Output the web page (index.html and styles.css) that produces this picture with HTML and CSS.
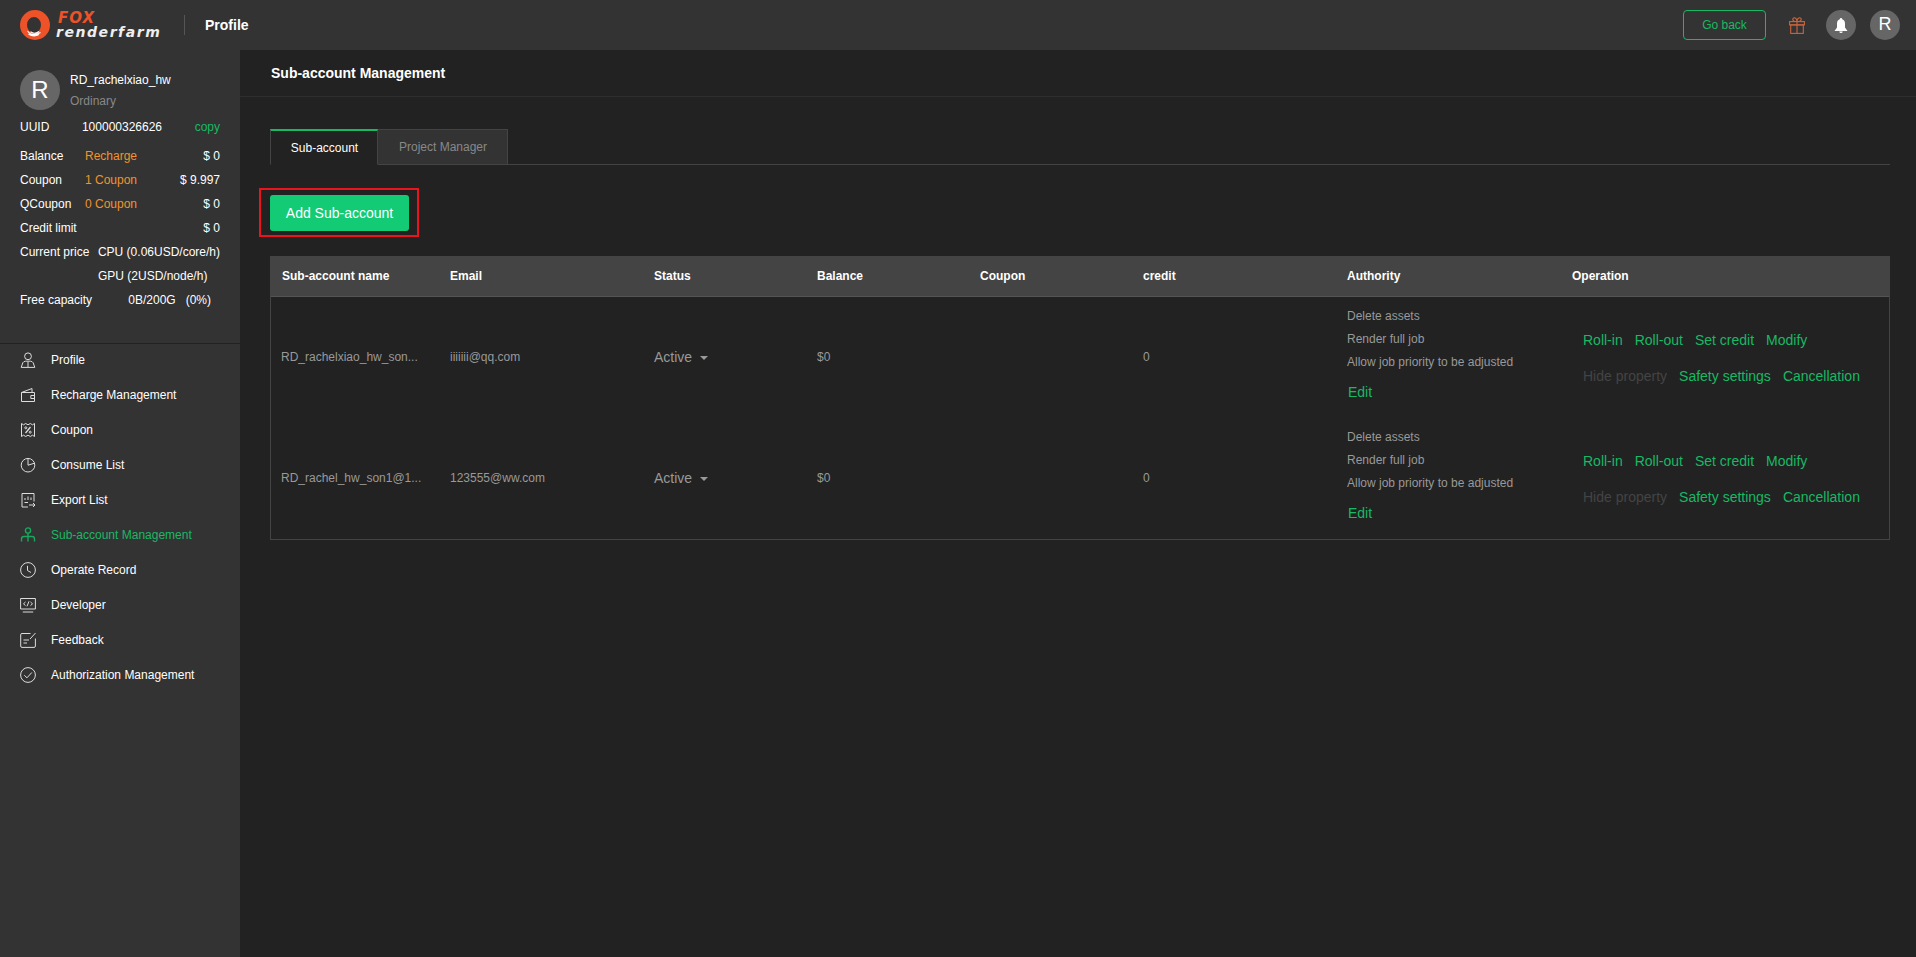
FILE: index.html
```html
<!DOCTYPE html>
<html lang="en">
<head>
<meta charset="utf-8">
<title>Sub-account Management</title>
<link rel="stylesheet" href="styles.css">
</head>
<body>
<header class="topbar">
  <div class="logo">
    <svg class="logo-ring" viewBox="0 0 30 30" width="30" height="30">
      <path fill="#ee5229" fill-rule="evenodd" d="M15 0a15 15 0 1 1 0 30a15 15 0 0 1 0-30zM14 7a7 8 0 1 0 0 16a7 8 0 0 0 0-16z"/>
      <path fill="none" stroke="#fff" stroke-width="1.100" d="M7.500 21q5 6.500 13 1.500M8.500 24q5 3.500 10.500 .5M10.500 21.800q4 3 8.500 -.3"/>
    </svg>
    <div class="logo-words">
      <span class="logo-fox">FOX</span>
      <span class="logo-render">renderfarm</span>
    </div>
  </div>
  <div class="top-sep"></div>
  <div class="top-title">Profile</div>
  <div class="top-actions">
    <button class="go-back">Go back</button>
    <svg class="gift" viewBox="0 0 16 17" width="16" height="17" fill="none" stroke="#c9653f" stroke-width="1.100">
      <rect x="0.600" y="4.600" width="14.800" height="3.300"/>
      <rect x="1.700" y="7.900" width="12.600" height="8.500"/>
      <path d="M8 4.600V16.400M8 4.600C5 4.600 3.500 3.500 3.800 2Q4.200.6 5.500.8C7 1.200 8 3 8 4.600C8 3 9 1.200 10.500.8Q11.800.6 12.200 2C12.500 3.500 11 4.600 8 4.600Z"/>
    </svg>
    <div class="circle bell">
      <svg viewBox="0 0 14 15" width="14" height="15"><path fill="#fff" d="M7 0a1.200 1.200 0 0 1 1.200 1.300C10.400 1.900 11 3.800 11 6v3.500L13.500 13H.5L3 9.500V6c0-2.200.6-4.100 2.800-4.700A1.200 1.200 0 0 1 7 0zM5.300 13.500h3.400a1.700 1.500 0 0 1-3.400 0z"/></svg>
    </div>
    <div class="circle letter">R</div>
  </div>
</header>
<div class="shell">
  <aside class="sidebar">
    <section class="account">
      <div class="identity">
        <div class="avatar">R</div>
        <div class="who">
          <div class="who-name">RD_rachelxiao_hw</div>
          <div class="who-level">Ordinary</div>
        </div>
      </div>
      <div class="row row-uuid"><span>UUID</span><span class="uuid">100000326626</span><span class="green">copy</span></div>
      <div class="row row-first"><span class="label">Balance</span><span class="orange">Recharge</span><span>$ 0</span></div>
      <div class="row"><span class="label">Coupon</span><span class="orange">1 Coupon</span><span>$ 9.997</span></div>
      <div class="row"><span class="label">QCoupon</span><span class="orange">0 Coupon</span><span>$ 0</span></div>
      <div class="row"><span class="label">Credit limit</span><span></span><span>$ 0</span></div>
      <div class="row row-price"><span>Current price</span><span>CPU (0.06USD/core/h)</span></div>
      <div class="row row-gpu"><span>GPU (2USD/node/h)</span></div>
      <div class="row row-free"><span>Free capacity</span><span class="free-value">0B/200G&nbsp;&nbsp;&nbsp;(0%)</span></div>
    </section>
    <nav class="nav">
      <a class="nav-item">
        <svg viewBox="0 0 16 16" class="nav-icon"><circle cx="8" cy="4.300" r="3.400"/><path d="M1.200 15.400L2.800 10.800Q3.600 9.400 5.500 9.200H10.500Q12.400 9.400 13.200 10.800L14.800 15.400ZM8 9.500V15"/></svg>
        Profile</a>
      <a class="nav-item">
        <svg viewBox="0 0 16 16" class="nav-icon"><path d="M1.500 5.500L12 1.500V5.500M1.500 5.500H14.500V14.500H1.500ZM14.500 8.500H10.800V11.500H14.500"/></svg>
        Recharge Management</a>
      <a class="nav-item">
        <svg viewBox="0 0 16 16" class="nav-icon"><path d="M1.500 1.500L3.500 2.800L5.700 1.500L8 2.800L10.300 1.500L12.500 2.800L14.500 1.500V14.500L12.500 13.200L10.300 14.500L8 13.200L5.700 14.500L3.500 13.200L1.500 14.500Z"/><path d="M10.500 5L5.500 11" stroke-width="1.300"/><circle cx="5.800" cy="5.800" r="1"/><circle cx="10.200" cy="10.200" r="1"/></svg>
        Coupon</a>
      <a class="nav-item">
        <svg viewBox="0 0 16 16" class="nav-icon"><circle cx="8" cy="8.200" r="6.800"/><path d="M8 1.400V8.200L14.500 6.200"/></svg>
        Consume List</a>
      <a class="nav-item">
        <svg viewBox="0 0 16 16" class="nav-icon"><path d="M8 15H2V1.500H14V9.500"/><path d="M5 6V8M8 4.500V8M11 5.500V8M4.500 10.500H8M9 13H15M13 11L15 13L13 15"/></svg>
        Export List</a>
      <a class="nav-item active">
        <svg viewBox="0 0 16 16" class="nav-icon"><circle cx="8" cy="3.500" r="2.600"/><path d="M8 6.100V9.500M1.500 14.500V12Q1.500 9.500 4 9.500H12Q14.500 9.500 14.500 12V14.500M8 9.500V14.500"/></svg>
        Sub-account Management</a>
      <a class="nav-item">
        <svg viewBox="0 0 16 16" class="nav-icon"><circle cx="8" cy="8" r="7.400"/><path d="M7.500 3.800V8.500L11 10.500"/></svg>
        Operate Record</a>
      <a class="nav-item">
        <svg viewBox="0 0 16 16" class="nav-icon"><path d="M.6 1.500H15.400V12H.6ZM2.800 15H13.200M5.500 5L3.500 6.800L5.500 8.600M10.500 5L12.500 6.800L10.500 8.600M9 4.300L7 9.300"/></svg>
        Developer</a>
      <a class="nav-item">
        <svg viewBox="0 0 16 16" class="nav-icon"><path d="M10.500 1.500H2Q.7 1.500 .7 2.800V14Q.7 15.400 2 15.400H14Q15.400 15.400 15.400 14V6.500M3.500 8H9M3.500 11H7M10 7L15.500 1"/></svg>
        Feedback</a>
      <a class="nav-item">
        <svg viewBox="0 0 16 16" class="nav-icon"><circle cx="8" cy="8" r="7.400"/><path d="M4.300 8.300L7 10.800L11.800 5.500"/></svg>
        Authorization Management</a>
    </nav>
  </aside>
  <main class="main">
    <h1 class="page-title">Sub-account Management</h1>
    <div class="content">
      <div class="tabs">
        <div class="tab tab-on">Sub-account</div>
        <div class="tab tab-off">Project Manager</div>
      </div>
      <div class="add-wrap">
        <button class="add-btn">Add Sub-account</button>
        <div class="highlight"></div>
      </div>
      <table class="grid">
        <colgroup>
          <col class="c-name"><col class="c-email"><col class="c-num"><col class="c-num"><col class="c-num"><col class="c-credit"><col class="c-auth"><col>
        </colgroup>
        <thead>
          <tr><th>Sub-account name</th><th>Email</th><th>Status</th><th>Balance</th><th>Coupon</th><th>credit</th><th>Authority</th><th class="th-op">Operation</th></tr>
        </thead>
        <tbody>
          <tr>
            <td class="td-name">RD_rachelxiao_hw_son...</td>
            <td>iiiiiii@qq.com</td>
            <td><span class="status">Active<i class="caret"></i></span></td>
            <td>$0</td>
            <td></td>
            <td>0</td>
            <td>
              <div class="perm">Delete assets</div>
              <div class="perm">Render full job</div>
              <div class="perm">Allow job priority to be adjusted</div>
              <a class="edit">Edit</a>
            </td>
            <td class="ops">
              <div class="op-line"><a>Roll-in</a><a>Roll-out</a><a>Set credit</a><a>Modify</a></div>
              <div class="op-line"><a class="off">Hide property</a><a>Safety settings</a><a>Cancellation</a></div>
            </td>
          </tr>
          <tr>
            <td class="td-name">RD_rachel_hw_son1@1...</td>
            <td>123555@ww.com</td>
            <td><span class="status">Active<i class="caret"></i></span></td>
            <td>$0</td>
            <td></td>
            <td>0</td>
            <td>
              <div class="perm">Delete assets</div>
              <div class="perm">Render full job</div>
              <div class="perm">Allow job priority to be adjusted</div>
              <a class="edit">Edit</a>
            </td>
            <td class="ops">
              <div class="op-line"><a>Roll-in</a><a>Roll-out</a><a>Set credit</a><a>Modify</a></div>
              <div class="op-line"><a class="off">Hide property</a><a>Safety settings</a><a>Cancellation</a></div>
            </td>
          </tr>
        </tbody>
      </table>
    </div>
  </main>
</div>
</body>
</html>
```
FILE: styles.css
```css
* { box-sizing: border-box; }
html, body { height: 100%; }
body {
  margin: 0;
  background: #222;
  color: #fff;
  font: 12px/1.2 "Liberation Sans", Arial, sans-serif;
  overflow: hidden;
}
.topbar {
  height: 50px;
  background: #333;
  display: flex;
  align-items: center;
  padding: 0 16px 0 20px;
}
.logo { display: flex; align-items: center; width: 164px; }
.logo-ring { flex: none; }
.logo-words { display: flex; flex-direction: column; margin-left: 6px; margin-top: 1px; font-style: italic; font-family: "DejaVu Sans", sans-serif; font-weight: 700; }
.logo-fox { color: #ee5229; font-size: 15px; line-height: 13px; letter-spacing: 1px; margin-left: 2px; }
.logo-render { color: #eee; font-size: 14px; line-height: 15px; letter-spacing: 1.550px; }
.top-sep { width: 1px; height: 20px; background: #555; }
.top-title { margin-left: 20px; font-size: 14px; font-weight: 700; }
.top-actions { margin-left: auto; display: flex; align-items: center; }
.go-back {
  width: 83px; height: 30px; margin: 0;
  background: transparent;
  border: 1px solid #17b964;
  border-radius: 4px;
  color: #17b964;
  font: 12px "Liberation Sans", Arial, sans-serif;
}
.gift { margin-left: 23px; }
.circle {
  width: 30px; height: 30px; border-radius: 50%;
  background: #666;
  display: flex; align-items: center; justify-content: center;
}
.bell { margin-left: 21px; }
.letter { margin-left: 14px; font-size: 18px; }
.shell { display: flex; height: calc(100vh - 50px); }
.sidebar { width: 240px; flex: none; background: #333; }
.account { padding: 20px 20px 31px; border-bottom: 1px solid #222; }
.identity { display: flex; align-items: flex-start; height: 45px; }
.avatar {
  width: 40px; height: 40px; border-radius: 50%;
  background: #666; font-size: 24px;
  display: flex; align-items: center; justify-content: center;
}
.who { margin-left: 10px; line-height: 20px; }
.who-level { color: #888; margin-top: 1px; }
.row { display: flex; justify-content: space-between; line-height: 24px; white-space: nowrap; }
.row-first { margin-top: 5px; }
.label { width: 65px; flex: none; }
.row .orange { flex: 1; }
.row-gpu { padding-left: 78px; justify-content: flex-start; }
.free-value { margin-right: 9px; }
.uuid { margin-left: 0; }
.orange { color: #f0932b; }
.green { color: #17b964; }
.nav { margin-top: -1px; }
.nav-item {
  display: flex; align-items: center;
  height: 35px; padding: 0 0 1px 20px;
  color: #fff;
}
.nav-icon {
  width: 16px; height: 16px; flex: none; margin-right: 15px;
  fill: none; stroke: #ddd; stroke-width: 1;
}
.active { color: #17b964; }
.active .nav-icon { stroke: #17a85c; stroke-width: 1.400; }
.main { flex: 1; min-width: 0; }
.page-title {
  margin: 0; height: 47px;
  padding-left: 31px;
  font-size: 14px; line-height: 46px; font-weight: 700;
  border-bottom: 1px solid #2e2e2e;
}
.content { padding: 32px 26px 0 30px; }
.tabs { display: flex; height: 36px; border-bottom: 1px solid #444; }
.tab { height: 36px; text-align: center; }
.tab-on { width: 108px; padding-left: 1px; background: #222; border-top: 2px solid #17b964; border-left: 1px solid #444; border-right: 1px solid #444; border-bottom: 1px solid #222; line-height: 35px; }
.tab-off { width: 130px; padding-left: 1px; background: #333; color: #888; border: 1px solid #444; border-left: 0; line-height: 35px; }
.add-wrap { position: relative; width: 139px; margin-top: 30px; }
.add-btn {
  display: block; width: 139px; height: 36px; margin: 0;
  background: #13cb75; color: #fff;
  border: 0; border-radius: 3px;
  font: 14px "Liberation Sans", Arial, sans-serif;
}
.highlight { position: absolute; top: -7px; left: -11px; right: -10px; bottom: -6px; border: 2px solid #e8141e; }
.grid {
  margin-top: 25px; width: 1620px;
  table-layout: fixed;
  border-collapse: separate; border-spacing: 0;
  border: 1px solid #444;
}
.c-name { width: 168px; }
.c-email { width: 204px; }
.c-num { width: 163px; }
.c-credit { width: 204px; }
.c-auth { width: 224px; }
.grid th {
  height: 40px; padding: 0 11px;
  background: #444; border-bottom: 1px solid #555;
  text-align: left; font-weight: 700;
}
.grid .th-op { padding-left: 12px; }
.grid td { height: 121px; padding: 0 11px; color: #999; vertical-align: middle; }
.grid .td-name { padding-left: 10px; white-space: nowrap; }
.status { display: inline-flex; align-items: center; font-size: 14px; }
.caret { width: 0; height: 0; margin-left: 8px; margin-top: 2px; border: 4px solid transparent; border-top: 4px solid #999; border-bottom: 0; }
.perm { line-height: 23px; }
.edit { display: block; line-height: 36px; font-size: 14px; color: #17b964; padding-left: 1px; }
.grid .ops { padding-left: 23px; }
.op-line { height: 36px; line-height: 36px; font-size: 14px; white-space: nowrap; display: flex; gap: 12px; color: #17b964; }
.op-line .off { color: #444; }
```
